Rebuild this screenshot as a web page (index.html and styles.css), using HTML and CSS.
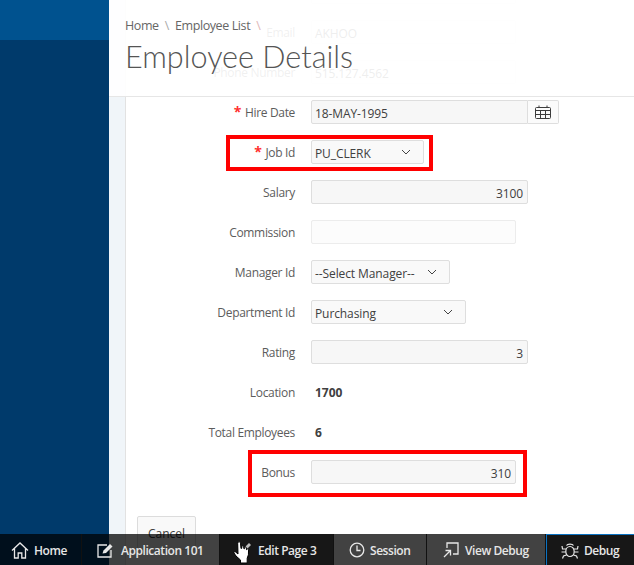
FILE: index.html
```html
<!DOCTYPE html>
<html>
<head>
    <meta charset="UTF-8">
    <title>Employee Details</title>
    <link rel="stylesheet" href="styles.css">
</head>
<body>
    <div class="page">
        <!-- Side navigation -->
        <aside class="nav"><div class="nav-top"></div></aside>

        <div class="gutter"></div>

        <main class="content">
            <div class="form">
                <div class="row">
                    <span class="label"></span>
                    <div class="field w-205 pale"></div>
                </div>
                <div class="row">
                    <span class="label">Email</span>
                    <div class="field w-205 pale">AKHOO</div>
                </div>
                <div class="row">
                    <span class="label">Phone Number</span>
                    <div class="field w-205 pale">515.127.4562</div>
                </div>
                <div class="row">
                    <span class="label"><b class="req">*</b> Hire Date</span>
                    <div class="date-group">
                        <div class="field w-217 joined">18-MAY-1995</div>
                        <div class="cal-btn">
                            <svg width="16" height="14" viewBox="0 0 16 14" fill="none" stroke="#3c3c3c">
                                <rect x="0.5" y="2.5" width="15" height="11" rx="1"/>
                                <path d="M0.5 5.500h15M0.500 9.500h15M5.500 5.500v8M10.500 5.500v8M4 0.500v2M12 0.500v2"/>
                            </svg>
                        </div>
                    </div>
                </div>
                <div class="row">
                    <div class="mark mark-job"></div>
                    <span class="label"><b class="req">*</b> Job Id</span>
                    <div class="field select w-113">PU_CLERK
                        <svg class="chev" width="10" height="6" viewBox="0 0 10 6" fill="none" stroke="#444"><path d="M1 1l4 4 4-4"/></svg>
                    </div>
                </div>
                <div class="row">
                    <span class="label">Salary</span>
                    <div class="field w-217 num">3100</div>
                </div>
                <div class="row">
                    <span class="label">Commission</span>
                    <div class="field w-205 pale"></div>
                </div>
                <div class="row">
                    <span class="label">Manager Id</span>
                    <div class="field select w-139">--Select Manager--
                        <svg class="chev" width="10" height="6" viewBox="0 0 10 6" fill="none" stroke="#444"><path d="M1 1l4 4 4-4"/></svg>
                    </div>
                </div>
                <div class="row">
                    <span class="label">Department Id</span>
                    <div class="field select w-155">Purchasing
                        <svg class="chev" width="10" height="6" viewBox="0 0 10 6" fill="none" stroke="#444"><path d="M1 1l4 4 4-4"/></svg>
                    </div>
                </div>
                <div class="row">
                    <span class="label">Rating</span>
                    <div class="field w-217 num">3</div>
                </div>
                <div class="row">
                    <span class="label">Location</span>
                    <span class="value">1700</span>
                </div>
                <div class="row">
                    <span class="label">Total Employees</span>
                    <span class="value">6</span>
                </div>
                <div class="row">
                    <div class="mark mark-bonus"></div>
                    <span class="label">Bonus</span>
                    <div class="field w-205 num">310</div>
                </div>
                <div class="actions">
                    <button class="btn">Cancel</button>
                </div>
            </div>
        </main>

        <header class="head">
            <div class="crumbs">
                <span>Home</span><i>\</i><span>Employee List</span><i class="last">\</i>
            </div>
            <h1>Employee Details</h1>
        </header>

        <!-- Developer toolbar -->
        <div class="devbar">
            <div class="dev dev-home">
                <svg width="18" height="17" viewBox="0 0 18 17" fill="none" stroke="#e8e8e8" stroke-width="1.3"><path d="M1 8.500L9 1l8 7.500M3.500 6.500V16h3.700v-5h3.600v5h3.700V6.500"/></svg>
                <span>Home</span>
            </div>
            <div class="dev dev-app">
                <svg width="17" height="15" viewBox="0 0 17 15" fill="none" stroke="#e8e8e8" stroke-width="1.3"><path d="M10 2H1v12h13V7"/><path d="M5.500 10.500l1-3L13 1l2.500 2.500L9 10z" fill="#e8e8e8" stroke="none"/></svg>
                <span>Application 101</span>
            </div>
            <div class="dev dev-edit dark">
                <svg class="pen" width="8" height="8" viewBox="0 0 8 8"><path d="M0 6l5-5 2 2-5 5H0z" fill="#bdbdbd"/></svg>
                <svg class="hand" width="18" height="23" viewBox="0 0 18 23">
                    <path d="M5.500 1c1-.5 1.900.2 2 1.200l.5 5.300.7-.2.200-1.800c.1-1 1.500-1 1.700 0l.3 2.200.5.100.3-1.300c.2-.9 1.500-.8 1.600.2l.2 2 .4.100.3-.7c.3-.8 1.400-.6 1.400.3l-.2 5.400-1.200 3.400V22H7.500v-3l-4.500-4-2-3c-.5-1 .6-1.800 1.500-1.100L5 13 4.700 2.500c0-.6.300-1.200.8-1.500z" fill="#fff" stroke="#000" stroke-width="1"/>
                </svg>
                <span>Edit Page 3</span>
            </div>
            <div class="dev dev-session">
                <svg width="16" height="16" viewBox="0 0 16 16" fill="none" stroke="#e8e8e8" stroke-width="1.3"><circle cx="8" cy="8" r="6.800"/><path d="M8 3.500V8.500H11.500"/></svg>
                <span>Session</span>
            </div>
            <div class="dev dev-view">
                <svg width="16" height="16" viewBox="0 0 16 16" fill="none" stroke="#e8e8e8" stroke-width="1.3"><path d="M4 6V1h11v11h-5"/><path d="M1 15l6-6M2.500 8.500H7.500V13.500"/></svg>
                <span>View Debug</span>
            </div>
            <div class="dev dev-debug dark">
                <svg width="18" height="16" viewBox="0 0 18 16" fill="none" stroke="#e8e8e8" stroke-width="1.2"><ellipse cx="9" cy="8.500" rx="4.200" ry="5"/><path d="M5.500 2.500c1-1.800 6-1.800 7 0M5 6H1.500L1 3M13 6h3.500L17 3M4.800 9H0.500M13.200 9h4.300M5.500 12l-3 1-1 2.500M12.500 12l3 1 1 2.500"/></svg>
                <span>Debug</span>
            </div>
        </div>
    </div>
</body>
</html>
```

FILE: styles.css
```css
html, body {
    margin: 0;
    height: 100%;
    overflow: hidden;
}
body {
    font-family: "Open Sans", "Noto Sans", Arial, sans-serif;
    font-size: 12px;
    color: #404040;
    background: #fff;
}
.page {
    position: relative;
    display: flex;
    height: 565px;
    overflow: hidden;
}
.nav {
    width: 109px;
    flex: none;
    background: #003a6b;
}
.nav-top {
    height: 40px;
    background: #00528f;
}
.gutter {
    width: 16px;
    flex: none;
    background: #f0f5f9;
    border-right: 1px solid #e2e2e2;
}
.content {
    flex: 1;
    min-width: 0;
}
.form {
    margin-top: -28px;
}
.row {
    position: relative;
    display: flex;
    align-items: center;
    height: 40px;
}
.label {
    width: 169px;
    flex: none;
    margin-right: 16px;
    padding-top: 1px;
    text-align: right;
    color: #5c5c5c;
    letter-spacing: -0.33px;
}
.req {
    color: #ff3030;
    font-size: 14px;
    font-weight: bold;
    line-height: 10px;
    margin-right: 1px;
}
.value {
    margin-left: 4px;
    padding-top: 1px;
    font-weight: bold;
    color: #404040;
}
.field {
    position: relative;
    box-sizing: border-box;
    height: 24px;
    line-height: 23px;
    padding: 1px 3px 0;
    background: #f7f7f7;
    border: 1px solid #dedede;
    border-radius: 2px;
    letter-spacing: -0.1px;
}
.pale {
    background: #fcfcfc;
    border-color: #ececec;
}
.num {
    text-align: right;
    padding-right: 4px;
}
.select {
    background: #f9f9f9;
}
.chev {
    position: absolute;
    right: 12px;
    top: 8px;
}
.w-113 { width: 113px; }
.w-139 { width: 139px; }
.w-155 { width: 155px; }
.w-205 { width: 205px; }
.w-217 { width: 217px; }
.date-group {
    display: flex;
}
.joined {
    border-radius: 2px 0 0 2px;
}
.cal-btn {
    box-sizing: border-box;
    width: 31px;
    height: 24px;
    display: flex;
    align-items: center;
    justify-content: center;
    background: #fbfbfb;
    border: 1px solid #dedede;
    border-left: none;
    border-radius: 0 2px 2px 0;
}
/* red boxes drawn over the screenshot */
.mark {
    position: absolute;
    box-sizing: border-box;
    border: 4px solid #f00;
}
.mark-job {
    left: 100px;
    top: 3px;
    width: 207px;
    height: 36px;
}
.mark-bonus {
    left: 122px;
    top: -2px;
    width: 279px;
    height: 47px;
}
.actions {
    padding: 24px 0 0 11px;
}
.btn {
    width: 59px;
    height: 34px;
    padding: 0;
    font: inherit;
    color: #404040;
    background: #f9f9f9;
    border: 1px solid #dcdcdc;
    border-radius: 2px;
}
.head {
    position: absolute;
    left: 109px;
    right: 0;
    top: 0;
    height: 97px;
    padding-left: 16px;
    box-sizing: border-box;
    background: rgba(255, 255, 255, 0.91);
    border-bottom: 1px solid #e6e6e6;
}
.crumbs {
    margin-top: 17px;
    font-size: 12.5px;
    line-height: 18px;
    color: #666;
    letter-spacing: -0.4px;
}
.crumbs i {
    font-style: normal;
    color: #aaa;
    margin: 0 6px;
}
.crumbs i.last {
    color: #e0b8b8;
}
h1 {
    margin: 2px 0 0;
    font-family: Lato, "Open Sans", sans-serif;
    font-size: 30.6px;
    line-height: 40px;
    font-weight: 300;
    color: #555;
}
.devbar {
    position: absolute;
    left: 0;
    right: 0;
    bottom: 0;
    height: 31px;
    display: flex;
    background: rgba(0, 0, 0, 0.74);
    color: #e6e6e6;
    font-weight: 600;
}
.dev {
    position: relative;
    box-sizing: border-box;
    display: flex;
    align-items: center;
    gap: 7px;
    padding-top: 1px;
    padding-left: 11px;
    border-right: 1px solid #111;
    letter-spacing: -0.45px;
}
.dark {
    background: #171717;
}
.dev-home { width: 82px; gap: 5px; }
.dev-app { width: 138px; padding-left: 15px; }
.dev-edit { width: 114px; padding-left: 38px; }
.dev-session { width: 93px; padding-left: 15px; gap: 5px; }
.dev-view { width: 119px; padding-left: 16px; gap: 6px; }
.dev-debug {
    flex: 1;
    padding-left: 14px;
    gap: 5px;
    border-right: none;
    border-left: 1px solid #0a72c2;
    border-top: 1px solid #0a72c2;
}
.hand {
    position: absolute;
    left: 13px;
    top: 7px;
}
.pen {
    position: absolute;
    left: 24px;
    top: 8px;
}
```
